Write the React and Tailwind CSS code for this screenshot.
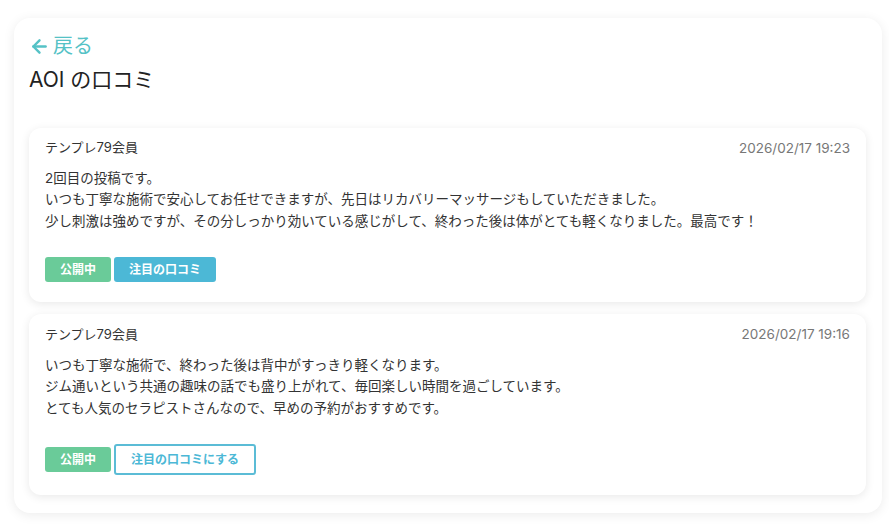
import { ArrowLeft } from "lucide-react";

const reviews = [
  {
    id: 1,
    name: "テンプレ79会員",
    date: "2026/02/17 19:23",
    lines: [
      "2回目の投稿です。",
      "いつも丁寧な施術で安心してお任せできますが、先日はリカバリーマッサージもしていただきました。",
      "少し刺激は強めですが、その分しっかり効いている感じがして、終わった後は体がとても軽くなりました。最高です！",
    ],
    featured: true,
  },
  {
    id: 2,
    name: "テンプレ79会員",
    date: "2026/02/17 19:16",
    lines: [
      "いつも丁寧な施術で、終わった後は背中がすっきり軽くなります。",
      "ジム通いという共通の趣味の話でも盛り上がれて、毎回楽しい時間を過ごしています。",
      "とても人気のセラピストさんなので、早めの予約がおすすめです。",
    ],
    featured: false,
  },
];

function ReviewCard({ review }) {
  return (
    <div className="rounded-xl bg-white px-4 pt-[10px] pb-[20px] shadow-[0_2px_10px_rgba(0,0,0,0.09)]">
      <div className="flex items-center justify-between">
        <p className="text-[13px] text-[#333]">{review.name}</p>
        <p className="text-[13.5px] text-[#777]">{review.date}</p>
      </div>
      <div className="mt-[10px] text-[13.5px] leading-[21.5px] text-[#333]">
        {review.lines.map((line) => (
          <p key={line}>{line}</p>
        ))}
      </div>
      <div className="mt-[25px] flex items-center gap-[3px]">
        <span className="flex h-[25px] w-[66px] items-center justify-center rounded-[3px] bg-[#6acb99] text-[12px] font-bold text-white">
          公開中
        </span>
        {review.featured ? (
          <span className="flex h-[25px] w-[102px] items-center justify-center rounded-[3px] bg-[#4cb8d6] text-[12px] font-bold text-white">
            注目の口コミ
          </span>
        ) : (
          <button className="flex h-[31px] w-[142px] items-center justify-center rounded-[3px] border-2 border-[#5bbcd6] bg-white text-[12px] font-bold text-[#4cb8d6]">
            注目の口コミにする
          </button>
        )}
      </div>
    </div>
  );
}

export default function App() {
  return (
    <div
      className="min-h-[530px] bg-white pl-[14px] pr-[7px] pt-[18px]"
      style={{ fontFamily: "Inter, 'Noto Sans CJK JP', sans-serif" }}
    >
      <div className="rounded-2xl bg-white pl-[15px] pr-[16px] pt-[13px] pb-[18px] shadow-[0_2px_12px_rgba(0,0,0,0.08)]">
        <a className="flex items-center gap-[3px] text-[20px] text-[#55c2c6]">
          <ArrowLeft size={21} strokeWidth={2.8} />
          <span>戻る</span>
        </a>
        <h1 className="mt-[3px] text-[21px] text-[#222]">AOI の口コミ</h1>
        <div className="mt-[32px] flex flex-col gap-[12px]">
          {reviews.map((review) => (
            <ReviewCard key={review.id} review={review} />
          ))}
        </div>
      </div>
    </div>
  );
}
